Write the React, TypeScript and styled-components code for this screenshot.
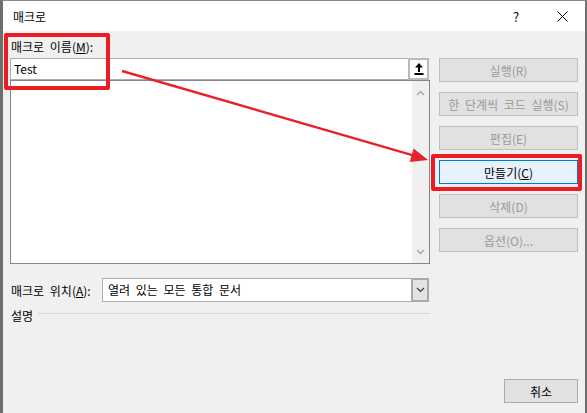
import React from 'react';
import styled, { createGlobalStyle } from 'styled-components';

const GlobalStyle = createGlobalStyle`
  html, body {
    margin: 0;
    padding: 0;
    background: #f0f0f0;
  }
  body {
    font-family: "Noto Sans CJK KR", "Noto Sans", sans-serif;
    font-size: 12px;
    word-spacing: 3px;
    color: #000;
  }
  * {
    box-sizing: border-box;
  }
`;

const Window = styled.div`
  position: relative;
  width: 587px;
  height: 413px;
  display: flex;
  flex-direction: column;
  background: #f0f0f0;
  border-top: 1px solid #8a8a8a;
  border-left: 3px solid #6e6e6e;
  border-right: 2px solid #6e6e6e;
  overflow: hidden;
`;

const TitleBar = styled.div`
  height: 30px;
  display: flex;
  align-items: center;
  background: #fff;
  padding-left: 10px;
`;

const Title = styled.span`
  flex: 1;
  font-size: 12px;
`;

const CaptionButton = styled.div`
  width: 46px;
  height: 30px;
  display: flex;
  align-items: center;
  justify-content: center;
  font-size: 13px;
`;

const Body = styled.div`
  flex: 1;
  display: flex;
  flex-direction: column;
  padding: 8px 7px 10px 7px;
`;

const TopArea = styled.div`
  display: flex;
  gap: 9px;
`;

const LeftCol = styled.div`
  width: 420px;
  display: flex;
  flex-direction: column;
`;

const FieldLabel = styled.div`
  height: 16px;
  line-height: 16px;
  padding-left: 1px;
  margin-bottom: 3px;
`;

const NameRow = styled.div`
  height: 22px;
  width: 419px;
  display: flex;
  background: #fff;
  border: 1px solid #abadb3;
`;

const NameInput = styled.div`
  flex: 1;
  padding-left: 3px;
  line-height: 20px;
`;

const CollapseButton = styled.div`
  width: 21px;
  margin: -1px -1px -1px 0;
  display: flex;
  align-items: center;
  justify-content: center;
  background: #fff;
  border: 2px solid #b9b9b9;
`;

const MacroList = styled.div`
  height: 184px;
  display: flex;
  background: #fff;
  border: 1px solid #828790;
`;

const ListArea = styled.div`
  flex: 1;
`;

const ScrollBar = styled.div`
  width: 17px;
  display: flex;
  flex-direction: column;
  justify-content: space-between;
  align-items: center;
  padding: 9px 0 8px;
  background: #f0f0f0;
`;

const ButtonCol = styled.div`
  width: 139px;
  padding-top: 19px;
  display: flex;
  flex-direction: column;
  gap: 10px;
`;

const DialogButton = styled.div<{ $disabled?: boolean; $focused?: boolean }>`
  height: 24px;
  display: flex;
  align-items: center;
  justify-content: center;
  background: ${p => (p.$focused ? '#e5f1fb' : '#e1e1e1')};
  border: 1px solid ${p => (p.$focused ? '#0078d7' : p.$disabled ? '#bfbfbf' : '#adadad')};
  color: ${p => (p.$disabled ? '#9a9a9a' : '#000')};
  white-space: nowrap;
`;

const LocationRow = styled.div`
  margin-top: 14px;
  height: 24px;
  display: flex;
  align-items: center;
`;

const LocationLabel = styled.div`
  width: 92px;
  padding-left: 1px;
  white-space: nowrap;
`;

const Dropdown = styled.div`
  width: 327px;
  height: 24px;
  display: flex;
  background: #fff;
  border: 1px solid #adadad;
`;

const DropText = styled.div`
  flex: 1;
  padding-left: 5px;
  line-height: 22px;
`;

const DropButton = styled.div`
  width: 18px;
  margin: -1px -1px -1px 0;
  display: flex;
  align-items: center;
  justify-content: center;
  background: #e3e3e3;
  border: 2px solid #a9a9a9;
`;

const DescRow = styled.div`
  width: 420px;
  margin-top: 5px;
  height: 16px;
  display: flex;
  align-items: center;
  gap: 5px;
  padding-left: 1px;
`;

const DescLine = styled.div`
  flex: 1;
  height: 1px;
  margin-top: -3px;
  background: #d7d7d7;
`;

const Footer = styled.div`
  margin-top: auto;
  display: flex;
  justify-content: flex-end;
`;

const CancelButton = styled(DialogButton)`
  width: 74px;
`;

const Highlight = styled.div<{ $x: number; $y: number; $w: number; $h: number }>`
  position: absolute;
  left: ${p => p.$x - 3}px;
  top: ${p => p.$y - 1}px;
  width: ${p => p.$w}px;
  height: ${p => p.$h}px;
  border: 4px solid #ec1c24;
  border-radius: 2px;
  pointer-events: none;
`;

const ArrowLayer = styled.svg`
  position: absolute;
  left: -3px;
  top: -1px;
  pointer-events: none;
`;

const Chevron = ({ up }: { up?: boolean }) => (
  <svg width="9" height="6" viewBox="0 0 9 6">
    <polyline
      points={up ? '1,5 4.5,1.5 8,5' : '1,1 4.5,4.5 8,1'}
      fill="none"
      stroke="#a6a6a6"
      strokeWidth="1.3"
    />
  </svg>
);

const DropChevron = () => (
  <svg width="9" height="6" viewBox="0 0 9 6">
    <polyline points="1,1 4.5,4.5 8,1" fill="none" stroke="#3c3c3c" strokeWidth="1.2" />
  </svg>
);

const CollapseIcon = () => (
  <svg width="10" height="12" viewBox="0 0 10 12">
    <polygon points="5,0 1,4.5 9,4.5" fill="#000" />
    <rect x="4" y="4" width="2" height="5" fill="#000" />
    <rect x="0.5" y="10" width="9" height="2" fill="#000" />
  </svg>
);

const CloseIcon = () => (
  <svg width="11" height="11" viewBox="0 0 11 11">
    <path d="M0.5 0.5 L10.5 10.5 M10.5 0.5 L0.5 10.5" stroke="#000" strokeWidth="1" />
  </svg>
);

const buttons = [
  { label: '실행(R)', disabled: true },
  { label: '한 단계씩 코드 실행(S)', disabled: true },
  { label: '편집(E)', disabled: true },
  { label: 'create', focused: true },
  { label: '삭제(D)', disabled: true },
  { label: '옵션(O)...', disabled: true },
];

export default function App() {
  return (
    <>
      <GlobalStyle />
      <Window>
        <TitleBar>
          <Title>매크로</Title>
          <CaptionButton>?</CaptionButton>
          <CaptionButton>
            <CloseIcon />
          </CaptionButton>
        </TitleBar>
        <Body>
          <TopArea>
            <LeftCol>
              <FieldLabel>
                매크로 이름(<u>M</u>):
              </FieldLabel>
              <NameRow>
                <NameInput>Test</NameInput>
                <CollapseButton>
                  <CollapseIcon />
                </CollapseButton>
              </NameRow>
              <MacroList>
                <ListArea />
                <ScrollBar>
                  <Chevron up />
                  <Chevron />
                </ScrollBar>
              </MacroList>
            </LeftCol>
            <ButtonCol>
              {buttons.map(b => (
                <DialogButton key={b.label} $disabled={b.disabled} $focused={b.focused}>
                  {b.label === 'create' ? (
                    <span>
                      만들기(<u>C</u>)
                    </span>
                  ) : (
                    b.label
                  )}
                </DialogButton>
              ))}
            </ButtonCol>
          </TopArea>
          <LocationRow>
            <LocationLabel>
              매크로 위치(<u>A</u>):
            </LocationLabel>
            <Dropdown>
              <DropText>열려 있는 모든 통합 문서</DropText>
              <DropButton>
                <DropChevron />
              </DropButton>
            </Dropdown>
          </LocationRow>
          <DescRow>
            <span>설명</span>
            <DescLine />
          </DescRow>
          <Footer>
            <CancelButton>취소</CancelButton>
          </Footer>
        </Body>
        <Highlight $x={4} $y={33} $w={106} $h={57} />
        <Highlight $x={431} $y={154} $w={151} $h={37} />
        <ArrowLayer width="587" height="413" viewBox="0 0 587 413">
          <line x1="122" y1="71" x2="414" y2="155.6" stroke="#e8212a" strokeWidth="2.4" />
          <polygon points="428,160 413.6,148.6 409.7,162" fill="#e8212a" />
        </ArrowLayer>
      </Window>
    </>
  );
}
